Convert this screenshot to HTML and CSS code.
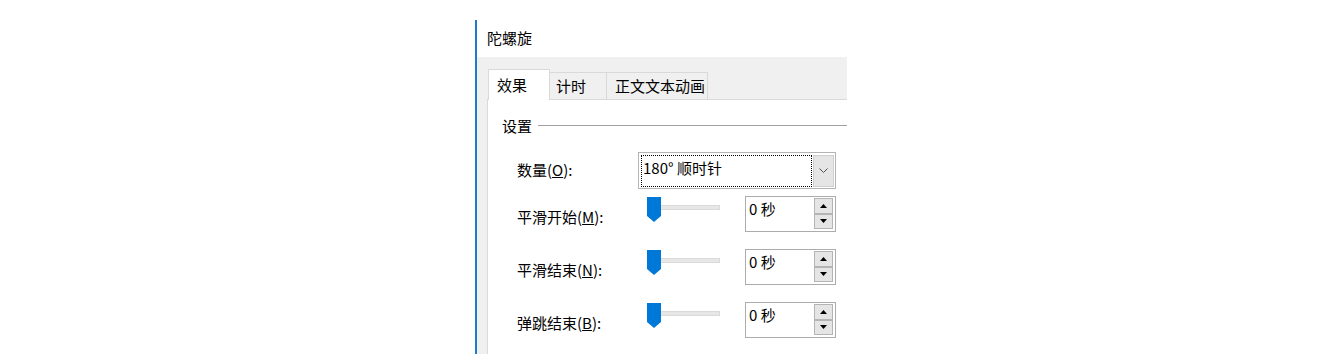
FILE: index.html
```html
<!DOCTYPE html>
<html>

	<head>
		<meta charset="UTF-8">
		<title>陀螺旋</title>
		<link rel="stylesheet" href="styles.css">
	</head>

	<body>
		<div id="dialog">
			<div class="title">陀螺旋</div>
			<div class="main">
				<ul class="tabs">
					<li class="tab active">效果</li>
					<li class="tab timing">计时</li>
					<li class="tab text-anim">正文文本动画</li>
				</ul>
				<div class="panel">
					<div class="group"><span>设置</span><i class="rule"></i></div>

					<div class="row row-first">
						<label class="name name-wide">数量(<u>O</u>):</label>
						<div class="combo">
							<div class="combo-field">180° 顺时针</div>
							<div class="combo-btn">
								<svg width="9" height="5" viewBox="0 0 9 5"><polyline points="0.5,0.5 4.5,4.5 8.5,0.5" fill="none" stroke="#505050" stroke-width="1"/></svg>
							</div>
						</div>
					</div>

					<div class="row">
						<label class="name">平滑开始(<u>M</u>):</label>
						<div class="slider">
							<svg class="thumb" width="14" height="25" viewBox="0 0 14 25"><path d="M0 0H14V19L7 25L0 19Z" fill="#0078d7"/></svg>
							<i class="track"></i>
						</div>
						<div class="spin">
							<div class="spin-value">0 秒</div>
							<div class="spin-btns">
								<span class="spin-btn"><svg width="7" height="4" viewBox="0 0 7 4"><path d="M3.5 0L7 4H0Z"/></svg></span>
								<span class="spin-btn"><svg width="7" height="4" viewBox="0 0 7 4"><path d="M0 0H7L3.5 4Z"/></svg></span>
							</div>
						</div>
					</div>

					<div class="row">
						<label class="name">平滑结束(<u>N</u>):</label>
						<div class="slider">
							<svg class="thumb" width="14" height="25" viewBox="0 0 14 25"><path d="M0 0H14V19L7 25L0 19Z" fill="#0078d7"/></svg>
							<i class="track"></i>
						</div>
						<div class="spin">
							<div class="spin-value">0 秒</div>
							<div class="spin-btns">
								<span class="spin-btn"><svg width="7" height="4" viewBox="0 0 7 4"><path d="M3.5 0L7 4H0Z"/></svg></span>
								<span class="spin-btn"><svg width="7" height="4" viewBox="0 0 7 4"><path d="M0 0H7L3.5 4Z"/></svg></span>
							</div>
						</div>
					</div>

					<div class="row">
						<label class="name">弹跳结束(<u>B</u>):</label>
						<div class="slider">
							<svg class="thumb" width="14" height="25" viewBox="0 0 14 25"><path d="M0 0H14V19L7 25L0 19Z" fill="#0078d7"/></svg>
							<i class="track"></i>
						</div>
						<div class="spin">
							<div class="spin-value">0 秒</div>
							<div class="spin-btns">
								<span class="spin-btn"><svg width="7" height="4" viewBox="0 0 7 4"><path d="M3.5 0L7 4H0Z"/></svg></span>
								<span class="spin-btn"><svg width="7" height="4" viewBox="0 0 7 4"><path d="M0 0H7L3.5 4Z"/></svg></span>
							</div>
						</div>
					</div>
				</div>
			</div>
		</div>
	</body>

</html>
```

FILE: styles.css
```css
html,
body {
	width: 100%;
	height: 100%;
	margin: 0;
	background: #fff;
}

body {
	font: 15px/1.2 "Noto Sans CJK SC", "Liberation Sans", sans-serif;
	color: #000;
}

ul,
li {
	margin: 0;
	padding: 0;
	list-style: none;
}

svg {
	display: block;
}

#dialog {
	margin: 20px 0 0 475px;
	width: 370px;
	height: 334px;
	border-left: 2px solid #1f7bc9;
	display: flex;
	flex-direction: column;
}

.title {
	height: 37px;
	line-height: 36px;
	padding-left: 10px;
	background: #fff;
}

.main {
	flex: 1;
	display: flex;
	flex-direction: column;
	background: #f0f0f0;
	padding-left: 10px;
}

.tabs {
	height: 42px;
	display: flex;
	align-items: flex-end;
	padding-left: 1px;
}

.tab {
	box-sizing: border-box;
	height: 27px;
	line-height: 26px;
	border-top: 1px solid #d9d9d9;
	border-right: 1px solid #d9d9d9;
	background: #f0f0f0;
}

.tab.active {
	width: 62px;
	height: 31px;
	line-height: 29px;
	padding-left: 8px;
	border-left: 1px solid #d9d9d9;
	background: #fff;
	margin-bottom: -1px;
	position: relative;
	z-index: 1;
}

.tab.timing {
	width: 57px;
	padding-left: 6px;
}

.tab.text-anim {
	width: 101px;
	padding-left: 8px;
}

.panel {
	flex: 1;
	background: #fff;
	border-top: 1px solid #d9d9d9;
	border-left: 1px solid #dadada;
	padding: 16px 0 0 14px;
}

.group {
	display: flex;
	align-items: center;
	height: 20px;
	line-height: 20px;
}

.rule {
	flex: 1;
	height: 1px;
	margin: 0 0 1px 6px;
	background: #a0a0a0;
}

.row {
	display: flex;
	align-items: flex-start;
	height: 36px;
	margin: 17px 0 0 15px;
}

.row-first {
	height: 37px;
	margin-top: 16px;
}

.name {
	width: 130px;
	flex: none;
	padding-top: 6px;
	line-height: 30px;
}

.name-wide {
	width: 121px;
	padding-top: 0;
	line-height: 36px;
}

.row-first + .row {
	margin-top: 7px;
}

.combo {
	box-sizing: border-box;
	width: 198px;
	height: 37px;
	border: 1px solid #b4b4b4;
	display: flex;
	align-items: center;
}

.combo-field {
	flex: 1;
	height: 32px;
	box-sizing: border-box;
	margin-left: 2px;
	border: 1px dotted #000;
	padding-left: 1px;
	line-height: 24px;
	white-space: nowrap;
}

.combo-btn {
	box-sizing: border-box;
	width: 21px;
	height: 32px;
	margin: 0 1px;
	background: #e5e5e5;
	border: 1px solid #cfcfcf;
	display: flex;
	align-items: center;
	justify-content: center;
}

.slider {
	width: 73px;
	margin-top: 1px;
	display: flex;
	align-items: flex-start;
	flex: none;
}

.thumb {
	flex: none;
}

.track {
	flex: 1;
	height: 5px;
	margin-top: 8px;
	box-sizing: border-box;
	background: #e7e7e7;
	border: 1px solid #dadada;
	border-left: 0;
}

.spin {
	box-sizing: border-box;
	width: 91px;
	height: 36px;
	margin-left: 25px;
	border: 1px solid #acacac;
	display: flex;
}

.spin-value {
	flex: 1;
	padding: 1px 0 0 3px;
	line-height: 22px;
}

.spin-btns {
	display: flex;
	flex-direction: column;
	margin: 1px 2px 2px 0;
}

.spin-btn {
	box-sizing: border-box;
	width: 19px;
	height: 16px;
	background: #e5e5e5;
	border: 1px solid #b4b4b4;
	display: flex;
	align-items: center;
	justify-content: center;
}
```
